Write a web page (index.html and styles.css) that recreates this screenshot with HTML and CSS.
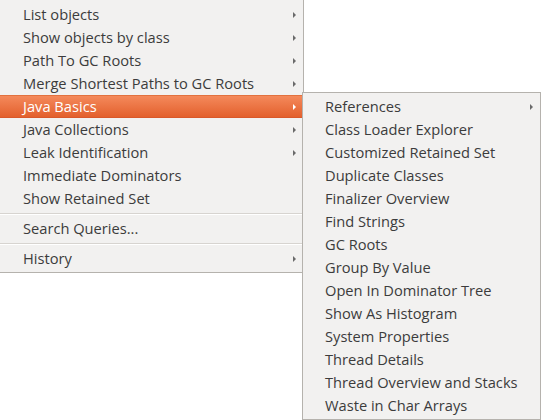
FILE: index.html
```html
<!DOCTYPE html>
<html>
<head>
<meta charset="utf-8">
<link rel="stylesheet" href="styles.css">
</head>
<body>
<div class="stage">
  <div class="menu main">
    <div class="item sub"><span>List objects</span><i class="arrow"></i></div>
    <div class="item sub"><span>Show objects by class</span><i class="arrow"></i></div>
    <div class="item sub"><span>Path To GC Roots</span><i class="arrow"></i></div>
    <div class="item sub"><span>Merge Shortest Paths to GC Roots</span><i class="arrow"></i></div>
    <div class="item sub active"><span>Java Basics</span><i class="arrow"></i></div>
    <div class="item sub"><span>Java Collections</span><i class="arrow"></i></div>
    <div class="item sub"><span>Leak Identification</span><i class="arrow"></i></div>
    <div class="item"><span>Immediate Dominators</span></div>
    <div class="item"><span>Show Retained Set</span></div>
    <div class="sep"></div>
    <div class="item"><span>Search Queries...</span></div>
    <div class="sep"></div>
    <div class="item sub"><span>History</span><i class="arrow"></i></div>
  </div>
  <div class="menu submenu">
    <div class="item sub"><span>References</span><i class="arrow"></i></div>
    <div class="item"><span>Class Loader Explorer</span></div>
    <div class="item"><span>Customized Retained Set</span></div>
    <div class="item"><span>Duplicate Classes</span></div>
    <div class="item"><span>Finalizer Overview</span></div>
    <div class="item"><span>Find Strings</span></div>
    <div class="item"><span>GC Roots</span></div>
    <div class="item"><span>Group By Value</span></div>
    <div class="item"><span>Open In Dominator Tree</span></div>
    <div class="item"><span>Show As Histogram</span></div>
    <div class="item"><span>System Properties</span></div>
    <div class="item"><span>Thread Details</span></div>
    <div class="item"><span>Thread Overview and Stacks</span></div>
    <div class="item"><span>Waste in Char Arrays</span></div>
  </div>
</div>
</body>
</html>
```

FILE: styles.css
```css
html, body {
  margin: 0;
  padding: 0;
  background: #ffffff;
}
.stage {
  display: flex;
  align-items: flex-start;
  width: 541px;
  height: 420px;
  overflow: hidden;
}
.menu {
  box-sizing: border-box;
  background: #f2f1f0;
  font-family: "Open Sans", sans-serif;
  font-size: 14.67px;
  color: #3c3c3c;
}
.main {
  width: 304px;
  height: 273px;
  padding: 3px 0 2px 0;
  border-right: 1px solid #b5b2ad;
  border-bottom: 1px solid #b5b2ad;
}
.submenu {
  width: 239px;
  height: 328px;
  margin-top: 92px;
  margin-left: -2px;
  padding: 2px 0 2px 0;
  border: 1px solid #b5b2ad;
}
.item {
  box-sizing: border-box;
  height: 23px;
  display: flex;
  align-items: center;
  justify-content: space-between;
  padding-left: 23px;
  padding-right: 7px;
  white-space: nowrap;
}
.submenu .item {
  padding-left: 22px;
  padding-right: 7px;
}
.item span {
  line-height: 23px;
}
.arrow {
  width: 0;
  height: 0;
  border-top: 3px solid transparent;
  border-bottom: 3px solid transparent;
  border-left: 3px solid #6a6a6a;
}
.active {
  background: linear-gradient(#f4895b, #e3602d);
  border-top: 1px solid #e2713f;
  border-bottom: 1px solid #d9582a;
  color: #ffffff;
}
.active .arrow {
  border-left-color: #ffffff;
}
.sep {
  height: 7px;
  display: flex;
  align-items: center;
}
.sep::before {
  content: "";
  display: block;
  width: 100%;
  height: 1px;
  background: #d7d4d0;
  border-bottom: 1px solid #ffffff;
}
```
